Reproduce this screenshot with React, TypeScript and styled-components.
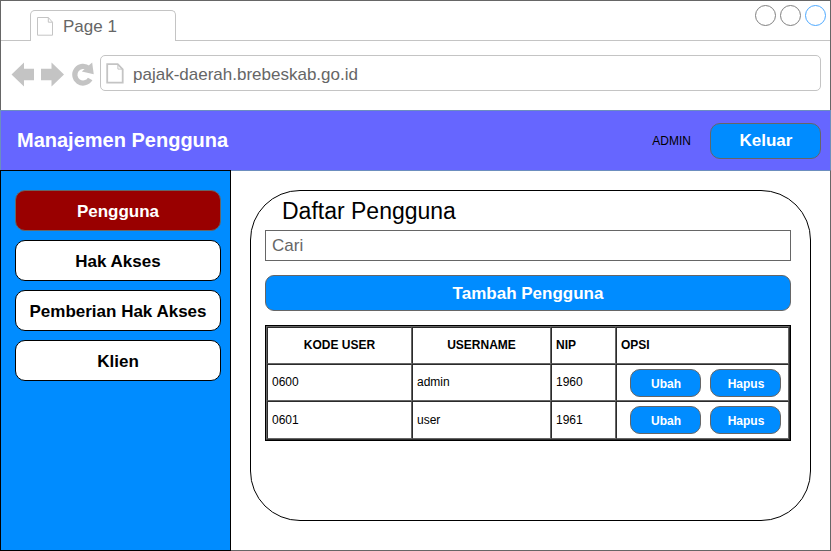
import React from "react";
import styled, { createGlobalStyle } from "styled-components";

const GlobalStyle = createGlobalStyle`
  *, *::before, *::after { box-sizing: border-box; }
  html, body { margin: 0; padding: 0; background: #fff; overflow: hidden; }
  body { font-family: "Liberation Sans", Arial, Helvetica, sans-serif; color: #000; }
  button, input { font-family: inherit; }
`;

const Window = styled.div`
  width: 831px;
  height: 551px;
  display: flex;
  flex-direction: column;
  background: #fff;
`;

const Chrome = styled.header`
  flex: 0 0 110px;
  border: solid #666;
  border-width: 1px 1px 0;
`;

const TabStrip = styled.div`
  height: 40px;
  padding: 0 4px 0 29px;
  display: flex;
  justify-content: space-between;
  align-items: flex-start;
  border-bottom: 1px solid #c4c4c4;
`;

const Tab = styled.div`
  width: 146px;
  height: 31px;
  margin-top: 9px;
  padding: 0 0 0 6px;
  display: flex;
  align-items: center;
  gap: 9px;
  background: #fff;
  border: 1px solid #c4c4c4;
  border-bottom: 0;
  border-radius: 5px 5px 0 0;
  font-size: 17px;
  color: #666;
`;

const TabLabel = styled.span`
  padding-top: 2px;
`;

const WindowControls = styled.div`
  display: flex;
  gap: 4px;
  margin-top: 4px;
`;

const Control = styled.span<{ $color: string }>`
  width: 21px;
  height: 21px;
  border: 1px solid ${(p) => p.$color};
  border-radius: 50%;
`;

const NavBar = styled.div`
  display: flex;
  align-items: center;
  padding: 14px 9px 0 10px;
`;

const NavIcons = styled.svg`
  display: block;
  width: 89px;
  height: 36px;
`;

const AddressBar = styled.div`
  flex: 1;
  height: 36px;
  padding-left: 5px;
  display: flex;
  align-items: center;
  gap: 9px;
  border: 1px solid #c4c4c4;
  border-radius: 5px;
  font-size: 17px;
  color: #666;
`;

const Address = styled.span`
  padding-top: 4px;
`;

const AppHeader = styled.div`
  flex: 0 0 60px;
  display: flex;
  align-items: center;
  padding: 0 9px 0 16px;
  background: #66f;
  border: solid #6c8ebf;
  border-width: 1px 1px 0;
`;

const AppTitle = styled.h1`
  flex: 1;
  margin: 0;
  padding-bottom: 1px;
  font-size: 20px;
  line-height: 24px;
  color: #fff;
`;

const Role = styled.span`
  margin-right: 19px;
  padding-top: 1px;
  font-size: 12px;
`;

const buttonSizes = {
  header: "width: 111px; height: 36px; border-radius: 10px; font-size: 17px; padding: 1px 0 0 1px;",
  wide: "width: 526px; height: 36px; border-radius: 9px; font-size: 17px; margin-top: 14px; padding-top: 2px;",
  small: "width: 71px; height: 28px; border-radius: 10px; font-size: 12px; padding: 2px 0 0 1px;",
};

const Button = styled.button<{ $size: keyof typeof buttonSizes }>`
  display: flex;
  align-items: center;
  justify-content: center;
  padding: 0;
  border: 1px solid #666;
  background: #008cff;
  color: #fff;
  font-weight: bold;
  ${(p) => buttonSizes[p.$size]}
`;

const Body = styled.div`
  flex: 1;
  display: flex;
`;

const Sidebar = styled.nav`
  width: 231px;
  padding: 19px 9px 0 14px;
  display: flex;
  flex-direction: column;
  gap: 9px;
  background: #008cff;
  border: 1px solid #000;
`;

const MenuItem = styled.button<{ $active?: boolean }>`
  height: 41px;
  padding: 2px 0 0 0;
  border: 1px solid ${(p) => (p.$active ? "#666" : "#000")};
  border-radius: 10px;
  background: ${(p) => (p.$active ? "#900" : "#fff")};
  color: ${(p) => (p.$active ? "#fff" : "#000")};
  font-size: 17px;
  font-weight: bold;
  white-space: nowrap;
`;

const Main = styled.main`
  flex: 1;
  padding: 19px 19px 0;
  border: solid #666;
  border-width: 0 1px 1px 0;
  border-top: 1px solid #6c8ebf;
`;

const Panel = styled.section`
  width: 561px;
  height: 331px;
  padding: 0 14px;
  border: 1px solid #000;
  border-radius: 50px;
`;

const PanelTitle = styled.h2`
  margin: 0;
  padding: 7px 0 0 17px;
  height: 39px;
  font-size: 23px;
  line-height: 26px;
  font-weight: normal;
`;

const Search = styled.input`
  display: block;
  width: 526px;
  height: 31px;
  padding: 0 6px;
  border: 1px solid #666;
  border-radius: 0;
  background: #fff;
  font-size: 17px;
  &::placeholder { color: #666; opacity: 1; }
`;

const TableFrame = styled.div`
  width: 526px;
  margin-top: 14px;
  border: 1px solid #000;
`;

const Table = styled.div`
  display: grid;
  grid-template-columns: 145px 139px 65px 173px;
  grid-template-rows: 37px 37px 38px;
  border: 1px solid;
  border-color: #666 #2b2b2b #2b2b2b #666;
`;

const Cell = styled.div<{ $head?: boolean; $center?: boolean; $raised?: boolean }>`
  display: flex;
  align-items: center;
  justify-content: ${(p) => (p.$center ? "center" : "flex-start")};
  padding: 0 4px ${(p) => (p.$raised ? "2px" : "0")};
  border: 1px solid;
  border-color: #2b2b2b #666 #666 #2b2b2b;
  font-size: 12px;
  font-weight: ${(p) => (p.$head ? "bold" : "normal")};
`;

const Actions = styled(Cell)`
  gap: 9px;
  padding: 0 0 0 13px;
`;

const PageIcon = ({ bold = false }: { bold?: boolean }) =>
  bold ? (
    <svg width="18" height="22" viewBox="0 0 18 22" fill="none" stroke="#c4c4c4">
      <path d="M1.2 2.1h10.5l5 5.2v13.3H1.2z" strokeWidth="1.8" />
      <path d="M11.9 2.1v5h4.8" strokeWidth="1" />
    </svg>
  ) : (
    <svg width="17" height="20" viewBox="0 0 17 20" fill="none" stroke="#c4c4c4">
      <path d="M.5 1.5h10.8l4.2 4.7v13H.5zM11.3 1.5v4.7h4.2" />
    </svg>
  );

const menu = ["Pengguna", "Hak Akses", "Pemberian Hak Akses", "Klien"];
const users = [
  { code: "0600", name: "admin", nip: "1960" },
  { code: "0601", name: "user", nip: "1961" },
];

export default function App() {
  return (
    <>
      <GlobalStyle />
      <Window>
        <Chrome>
          <TabStrip>
            <Tab>
              <PageIcon />
              <TabLabel>Page 1</TabLabel>
            </Tab>
            <WindowControls>
              <Control $color="#808080" />
              <Control $color="#808080" />
              <Control $color="#4da9ff" />
            </WindowControls>
          </TabStrip>
          <NavBar>
            <NavIcons viewBox="11 55 89 36">
              <path
                fill="#c4c4c4"
                d="M11.5 74.5 24 62.5v6.3h10v11.4H24v6.3zM64 74.5 51.5 62.5v6.3H41v11.4h10.5v6.3z"
              />
              <path d="M90.2 79A8.3 8.3 0 1 1 88.6 68.5" fill="none" stroke="#c4c4c4" strokeWidth="5.2" />
              <path d="M92.2 62.6l1.5 11.6-11.9-2.6z" fill="#c4c4c4" />
            </NavIcons>
            <AddressBar>
              <PageIcon bold />
              <Address>pajak-daerah.brebeskab.go.id</Address>
            </AddressBar>
          </NavBar>
        </Chrome>
        <AppHeader>
          <AppTitle>Manajemen Pengguna</AppTitle>
          <Role>ADMIN</Role>
          <Button $size="header">Keluar</Button>
        </AppHeader>
        <Body>
          <Sidebar>
            {menu.map((label, i) => (
              <MenuItem key={label} $active={i === 0}>
                {label}
              </MenuItem>
            ))}
          </Sidebar>
          <Main>
            <Panel>
              <PanelTitle>Daftar Pengguna</PanelTitle>
              <Search placeholder="Cari" />
              <Button $size="wide">Tambah Pengguna</Button>
              <TableFrame>
                <Table>
                  <Cell $head $raised $center>KODE USER</Cell>
                  <Cell $head $raised $center>USERNAME</Cell>
                  <Cell $head $raised>NIP</Cell>
                  <Cell $head $raised>OPSI</Cell>
                  {users.map((u, i) => (
                    <React.Fragment key={u.code}>
                      <Cell $raised={i === 0}>{u.code}</Cell>
                      <Cell $raised={i === 0}>{u.name}</Cell>
                      <Cell $raised={i === 0}>{u.nip}</Cell>
                      <Actions>
                        <Button $size="small">Ubah</Button>
                        <Button $size="small">Hapus</Button>
                      </Actions>
                    </React.Fragment>
                  ))}
                </Table>
              </TableFrame>
            </Panel>
          </Main>
        </Body>
      </Window>
    </>
  );
}
